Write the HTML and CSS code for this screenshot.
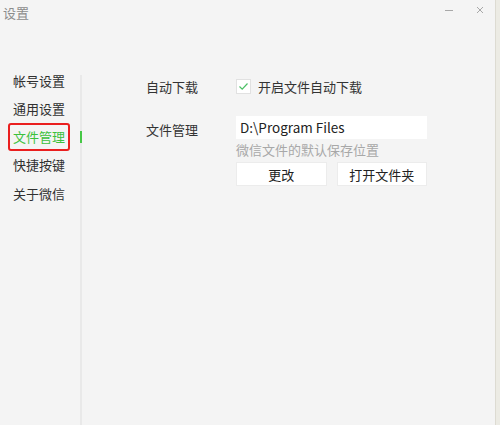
FILE: index.html
```html
<!DOCTYPE html>
<html lang="zh-CN">
<head>
    <meta charset="UTF-8">
    <title>设置</title>
    <link rel="stylesheet" href="styles.css">
</head>
<body>
    <div class="window">
        <header class="titlebar">
            <span class="title">设置</span>
            <div class="controls">
                <svg class="ctrl" width="10" height="10" viewBox="0 0 10 10"><path d="M1 5.5H9" stroke="#a8a8a8" stroke-width="1"/></svg>
                <svg class="ctrl" width="10" height="10" viewBox="0 0 10 10"><path d="M2 2L8 8M8 2L2 8" stroke="#a8a8a8" stroke-width="1"/></svg>
            </div>
        </header>
        <div class="main">
            <ul class="menu">
                <li class="menu-item">帐号设置</li>
                <li class="menu-item">通用设置</li>
                <li class="menu-item active">文件管理</li>
                <li class="menu-item">快捷按键</li>
                <li class="menu-item">关于微信</li>
            </ul>
            <div class="divider"></div>
            <div class="content">
                <div class="row row-download">
                    <span class="label">自动下载</span>
                    <label class="check">
                        <span class="box">
                            <svg width="13" height="13" viewBox="0 0 13 13"><path d="M2.5 6.5L5.2 9.2L10.5 3.5" fill="none" stroke="#4cc066" stroke-width="1.2"/></svg>
                        </span>
                        开启文件自动下载
                    </label>
                </div>
                <div class="row row-path">
                    <span class="label">文件管理</span>
                    <div class="path-group">
                        <div class="path-input">D:\Program Files</div>
                        <div class="hint">微信文件的默认保存位置</div>
                        <div class="buttons">
                            <button class="btn">更改</button>
                            <button class="btn">打开文件夹</button>
                        </div>
                    </div>
                </div>
            </div>
        </div>
    </div>
</body>
</html>
```

FILE: styles.css
```css
body {
    margin: 0;
    padding: 0;
    background-color: #ecebe4;
    font-family: "Noto Sans CJK SC", "Microsoft YaHei", sans-serif;
    font-size: 13px;
    color: #333333;
}
.window {
    width: 495px;
    height: 425px;
    background-color: #f4f4f4;
    border-right: 1px solid #dddbd2;
    display: flex;
    flex-direction: column;
}
.titlebar {
    height: 66px;
    display: flex;
    justify-content: space-between;
    align-items: flex-start;
    padding: 4px 10px 0 3px;
    box-sizing: border-box;
}
.title {
    line-height: 17px;
    color: #8c8c8c;
}
.controls {
    display: flex;
    gap: 21px;
    padding-top: 1px;
}
.main {
    flex: 1;
    display: flex;
}
.menu {
    list-style: none;
    margin: 0;
    padding: 0.5px 0 0 8px;
    width: 72px;
}
.menu-item {
    position: relative;
    width: 55px;
    line-height: 24.3px;
    padding: 0 0 0 3px;
    border: 2px solid transparent;
    border-radius: 3px;
    color: #303030;
    white-space: nowrap;
}
.menu-item.active {
    border-color: #ea1f1f;
    color: #3cc13c;
}
.menu-item.active::after {
    content: "";
    position: absolute;
    left: 70px;
    top: 6px;
    width: 2px;
    height: 12px;
    background-color: #46c846;
}
.divider {
    width: 2px;
    margin-top: 9px;
    background-color: #e9e9e9;
}
.content {
    flex: 1;
    padding: 13px 0 0 64px;
}
.row {
    display: flex;
}
.label {
    width: 90px;
    flex-shrink: 0;
}
.row-download {
    align-items: center;
    height: 15px;
}
.check {
    display: flex;
    align-items: center;
    gap: 7px;
}
.box {
    width: 13px;
    height: 13px;
    background-color: #ffffff;
    border: 1px solid #e1e1e1;
    display: flex;
}
.row-path {
    margin-top: 22px;
}
.row-path .label {
    line-height: 23px;
    padding-top: 2px;
}
.path-group {
    width: 191px;
}
.path-input {
    height: 23px;
    line-height: 23px;
    background-color: #ffffff;
    padding-left: 4px;
    color: #222222;
    font-size: 13.5px;
}
.hint {
    color: #a8a8a8;
    line-height: 21px;
}
.buttons {
    display: flex;
    gap: 10px;
    margin-top: 2px;
}
.btn {
    flex: 1;
    height: 24px;
    padding: 0;
    background-color: #ffffff;
    border: 1px solid #ececec;
    font-family: inherit;
    font-size: 13px;
    color: #222222;
}
```
